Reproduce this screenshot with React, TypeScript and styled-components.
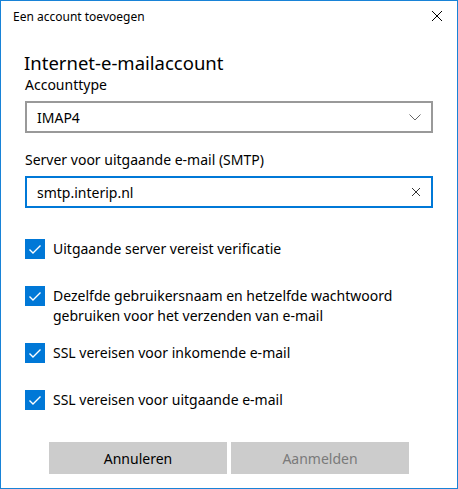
import * as React from 'react';
import styled, { createGlobalStyle } from 'styled-components';

const GlobalStyle = createGlobalStyle`
  html, body {
    margin: 0;
    padding: 0;
    background: #ffffff;
  }
  body {
    font-family: 'Noto Sans', 'Open Sans', sans-serif;
    color: #000000;
  }
`;

const Window = styled.div`
  box-sizing: border-box;
  width: 458px;
  height: 489px;
  border: 1px solid #1883d7;
  background: #ffffff;
  display: flex;
  flex-direction: column;
`;

const TitleBar = styled.div`
  height: 30px;
  display: flex;
  align-items: center;
  justify-content: space-between;
  padding: 0 14px 0 12px;
  font-size: 12px;
  color: #000000;
`;

const CloseButton = styled.button`
  border: none;
  background: transparent;
  padding: 0;
  width: 12px;
  height: 12px;
  display: flex;
  align-items: center;
  justify-content: center;
  cursor: pointer;
`;

const Content = styled.div`
  flex: 1;
  display: flex;
  flex-direction: column;
  padding: 0 24px;
`;

const Heading = styled.h1`
  margin: 20px 0 0 -1px;
  font-size: 18.5px;
  line-height: 24px;
  font-weight: 400;
`;

const FieldLabel = styled.label<{ $top: number }>`
  display: block;
  margin-top: ${p => p.$top}px;
  font-size: 14px;
  line-height: 20px;
`;

const Field = styled.div<{ $focused?: boolean }>`
  box-sizing: border-box;
  height: 32px;
  margin-top: 6px;
  border: 2px solid ${p => (p.$focused ? '#0078d7' : '#999999')};
  display: flex;
  align-items: center;
  padding: 0 10px 0 10px;
  font-size: 14px;
`;

const FieldValue = styled.span`
  flex: 1;
`;

const CheckList = styled.div`
  display: flex;
  flex-direction: column;
  margin-top: 31px;
`;

const CheckRow = styled.label<{ $top: number }>`
  display: flex;
  align-items: flex-start;
  gap: 8px;
  margin-top: ${p => p.$top}px;
  font-size: 14px;
  line-height: 20px;
`;

const Box = styled.span`
  flex: none;
  width: 20px;
  height: 20px;
  background: #0078d7;
  display: flex;
  align-items: center;
  justify-content: center;
`;

const Footer = styled.div`
  display: flex;
  justify-content: center;
  gap: 4px;
  margin-top: auto;
  margin-bottom: 14px;
`;

const Button = styled.button<{ $disabled?: boolean }>`
  width: 178px;
  height: 32px;
  border: none;
  background: #cccccc;
  font-family: inherit;
  font-size: 14px;
  color: ${p => (p.$disabled ? '#7a7a7a' : '#000000')};
  cursor: ${p => (p.$disabled ? 'default' : 'pointer')};
`;

const Check = () => (
  <Box>
    <svg width="20" height="20" viewBox="0 0 20 20">
      <path d="M4.5 10.5 L8 14 L15.5 6.5" fill="none" stroke="#ffffff" strokeWidth="1.4" />
    </svg>
  </Box>
);

const options = [
  { label: 'Uitgaande server vereist verificatie', top: 0 },
  { label: 'Dezelfde gebruikersnaam en hetzelfde wachtwoord gebruiken voor het verzenden van e-mail', top: 27 },
  { label: 'SSL vereisen voor inkomende e-mail', top: 17 },
  { label: 'SSL vereisen voor uitgaande e-mail', top: 27 },
];

export default function App() {
  return (
    <>
      <GlobalStyle />
      <Window>
        <TitleBar>
          <span>Een account toevoegen</span>
          <CloseButton aria-label="Sluiten">
            <svg width="12" height="12" viewBox="0 0 12 12">
              <path d="M1 1 L11 11 M11 1 L1 11" stroke="#000000" strokeWidth="1" />
            </svg>
          </CloseButton>
        </TitleBar>
        <Content>
          <Heading>Internet-e-mailaccount</Heading>
          <FieldLabel $top={0}>Accounttype</FieldLabel>
          <Field>
            <FieldValue>IMAP4</FieldValue>
            <svg width="12" height="7" viewBox="0 0 12 7">
              <path d="M0.5 0.5 L6 6 L11.5 0.5" fill="none" stroke="#666666" strokeWidth="1" />
            </svg>
          </Field>
          <FieldLabel $top={17}>Server voor uitgaande e-mail (SMTP)</FieldLabel>
          <Field $focused>
            <FieldValue>smtp.interip.nl</FieldValue>
            <svg width="10" height="10" viewBox="0 0 10 10">
              <path d="M1 1 L9 9 M9 1 L1 9" stroke="#333333" strokeWidth="1" />
            </svg>
          </Field>
          <CheckList>
            {options.map(o => (
              <CheckRow key={o.label} $top={o.top}>
                <Check />
                <span>{o.label}</span>
              </CheckRow>
            ))}
          </CheckList>
        </Content>
        <Footer>
          <Button>Annuleren</Button>
          <Button $disabled>Aanmelden</Button>
        </Footer>
      </Window>
    </>
  );
}
